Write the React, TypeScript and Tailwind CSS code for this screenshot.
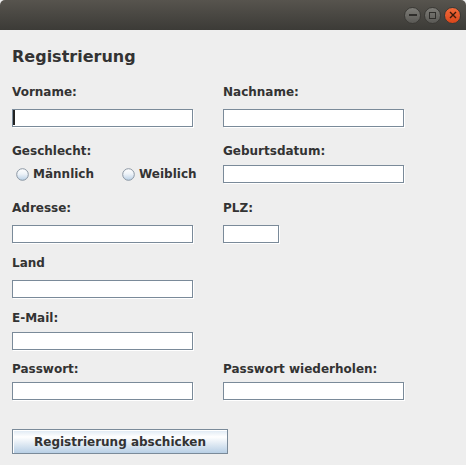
import React from "react";

function Field({ w = "w-[181px]", caret = false }: { w?: string; caret?: boolean }) {
  return (
    <div className={`${w} h-[18px] border border-[#7a8a99] bg-white shadow-[1px_1px_0_#ffffff] flex`}>
      {caret && <div className="w-[2px] h-[15px] bg-[#222222]" />}
    </div>
  );
}

function Label({ children }: { children: React.ReactNode }) {
  return <div className="text-[12px] leading-[14px] font-bold whitespace-nowrap">{children}</div>;
}

function Radio({ label, w }: { label: string; w: string }) {
  return (
    <div className={`${w} pl-[4px] flex items-center gap-[4px]`}>
      <svg width="13" height="13" viewBox="0 0 13 13">
        <defs>
          <linearGradient id={`rg-${label}`} x1="0" y1="0" x2="0" y2="1">
            <stop offset="0" stopColor="#ffffff" />
            <stop offset="0.45" stopColor="#eef3f8" />
            <stop offset="1" stopColor="#b8cfe5" />
          </linearGradient>
        </defs>
        <circle cx="6.5" cy="6.5" r="5.8" fill={`url(#rg-${label})`} stroke="#8a96a3" strokeWidth="1" />
      </svg>
      <span className="text-[12px] leading-[14px] font-bold">{label}</span>
    </div>
  );
}

function TitleBar() {
  return (
    <div className="h-[30px] rounded-t-[5px] bg-linear-to-b from-[#57544e] to-[#3c3b37] flex items-center justify-end pr-[5px] gap-[3px]">
      <div className="w-[17px] h-[17px] rounded-full bg-linear-to-b from-[#7d7c77] to-[#5a5955] border border-[#3a3935] flex items-center justify-center">
        <div className="w-[8px] h-[1.5px] bg-[#2f2e2b]" />
      </div>
      <div className="w-[17px] h-[17px] rounded-full bg-linear-to-b from-[#7d7c77] to-[#5a5955] border border-[#3a3935] flex items-center justify-center">
        <div className="w-[7px] h-[7px] border-[1.5px] border-[#2f2e2b]" />
      </div>
      <div className="w-[17px] h-[17px] rounded-full bg-linear-to-b from-[#f26a3a] to-[#d9461a] border border-[#3a3935] flex items-center justify-center">
        <svg width="8" height="8" viewBox="0 0 8 8">
          <path d="M1 1 L7 7 M7 1 L1 7" stroke="#3a1a0c" strokeWidth="1.4" />
        </svg>
      </div>
    </div>
  );
}

export default function App() {
  return (
    <div className="w-[466px] h-[465px] bg-[#eeeeee] font-['DejaVu_Sans',sans-serif] text-[#333333]">
      <TitleBar />
      <div className="pl-[12px] pt-[17px] flex flex-col">
        <div className="text-[16px] leading-[19px] font-bold">Registrierung</div>

        <div className="grid grid-cols-[211px_1fr] mt-[19px]">
          <Label>Vorname:</Label>
          <Label>Nachname:</Label>
        </div>
        <div className="grid grid-cols-[211px_1fr] mt-[10px]">
          <Field caret />
          <Field />
        </div>

        <div className="grid grid-cols-[211px_1fr] mt-[17px]">
          <Label>Geschlecht:</Label>
          <Label>Geburtsdatum:</Label>
        </div>
        <div className="grid grid-cols-[211px_1fr] mt-[7px]">
          <div className="h-[18px] flex items-center">
            <Radio label="Männlich" w="w-[106px]" />
            <Radio label="Weiblich" w="w-[100px]" />
          </div>
          <Field />
        </div>

        <div className="grid grid-cols-[211px_1fr] mt-[18px]">
          <Label>Adresse:</Label>
          <Label>PLZ:</Label>
        </div>
        <div className="grid grid-cols-[211px_1fr] mt-[10px]">
          <Field />
          <Field w="w-[56px]" />
        </div>

        <div className="mt-[13px]">
          <Label>Land</Label>
        </div>
        <div className="mt-[10px]">
          <Field />
        </div>

        <div className="mt-[13px]">
          <Label>E-Mail:</Label>
        </div>
        <div className="mt-[7px]">
          <Field />
        </div>

        <div className="grid grid-cols-[211px_1fr] mt-[12px]">
          <Label>Passwort:</Label>
          <Label>Passwort wiederholen:</Label>
        </div>
        <div className="grid grid-cols-[211px_1fr] mt-[6px]">
          <Field />
          <Field />
        </div>

        <div className="mt-[29px]">
          <div className="w-[216px] h-[25px] border border-[#7a8a99] bg-[linear-gradient(to_bottom,#dde8f3_0%,#ffffff_30%,#b8cfe5_100%)] shadow-[inset_1px_1px_0_#ffffff] flex items-center justify-center text-[12px] leading-[14px] font-bold">
            Registrierung abschicken
          </div>
        </div>
      </div>
    </div>
  );
}
